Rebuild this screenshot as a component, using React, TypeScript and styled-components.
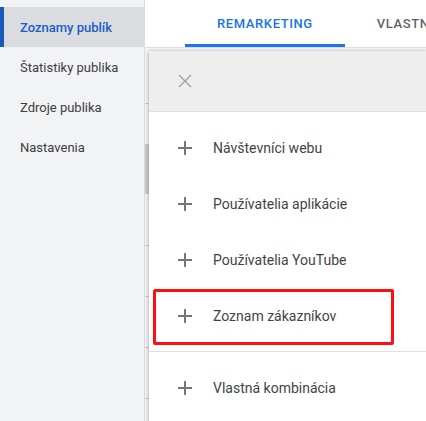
import React from "react"
import styled, { createGlobalStyle } from "styled-components"

const GlobalStyle = createGlobalStyle`
  html, body {
    margin: 0;
    padding: 0;
    width: 426px;
    height: 421px;
    overflow: hidden;
    background: #ffffff;
    font-family: Roboto, "Liberation Sans", Arial, sans-serif;
  }
`

const Page = styled.div`
  display: flex;
  height: 421px;
`

const Sidebar = styled.nav`
  width: 144px;
  flex-shrink: 0;
  padding-top: 7px;
  background: #f1f3f4;
  border-right: 1px solid #dadce0;
`

const NavItem = styled.div<{ $active?: boolean }>`
  display: flex;
  align-items: center;
  height: 40px;
  padding-left: 20px;
  font-size: 13px;
  white-space: nowrap;
  color: ${(p) => (p.$active ? "#1a5dcb" : "#3c4043")};
  font-weight: ${(p) => (p.$active ? 500 : 400)};
  background: ${(p) => (p.$active ? "#dadce0" : "transparent")};
  box-shadow: ${(p) => (p.$active ? "inset 4px 0 0 #185abc" : "none")};
`

const Main = styled.div`
  flex: 1;
  display: flex;
  flex-direction: column;
  min-width: 0;
  overflow: hidden;
`

const Tabs = styled.div`
  display: flex;
  height: 47px;
  padding-left: 40px;
  border-bottom: 1px solid #dadce0;
  flex-shrink: 0;
  overflow: hidden;
`

const Tab = styled.div<{ $active?: boolean }>`
  display: flex;
  align-items: center;
  padding: 0 32px;
  font-size: 13px;
  font-weight: 500;
  letter-spacing: 0.6px;
  text-transform: uppercase;
  white-space: nowrap;
  color: ${(p) => (p.$active ? "#1a73e8" : "#5f6368")};
  box-shadow: ${(p) => (p.$active ? "inset 0 -3px 0 #1a73e8" : "none")};
`

const Body = styled.div`
  position: relative;
  flex: 1;
  background: #f1f3f4;
`

const BgRow = styled.div<{ $h: number }>`
  height: ${(p) => p.$h}px;
  border-bottom: 1px solid #c8cacd;
`

const Scroll = styled.div`
  height: 50px;
  width: 4px;
  margin-top: 40px;
  background: #c9cbce;
`

const Panel = styled.div`
  position: absolute;
  left: 4px;
  top: 3px;
  right: 0;
  bottom: 0;
  background: #ffffff;
  box-shadow: 0 0 3px rgba(0, 0, 0, 0.22), -1px 1px 4px rgba(0, 0, 0, 0.12);
`

const PanelHeader = styled.div`
  display: flex;
  align-items: center;
  height: 60px;
  padding-left: 29px;
  background: #eeeeee;
  border-bottom: 1px solid #e0e0e0;
`

const List = styled.div`
  padding-top: 8px;
`

const Item = styled.div`
  position: relative;
  display: flex;
  align-items: center;
  gap: 21px;
  height: 56px;
  padding-left: 29px;
  font-size: 14px;
  color: #414447;
  white-space: nowrap;
`

const Divider = styled.div`
  height: 1px;
  margin: 7px 0 8px;
  background: #e0e0e0;
`

const Highlight = styled.div`
  position: absolute;
  left: 4px;
  top: 1px;
  width: 241px;
  height: 56px;
  box-sizing: border-box;
  border: 3px solid #ff1010;
  border-radius: 2px;
`

function CloseIcon() {
  return (
    <svg width="14" height="14" viewBox="0 0 14 14">
      <path d="M1 1L13 13M13 1L1 13" stroke="#a0a0a0" strokeWidth="1.4" />
    </svg>
  )
}

function PlusIcon() {
  return (
    <svg width="14" height="14" viewBox="0 0 14 14">
      <path d="M7 0V14M0 7H14" stroke="#757575" strokeWidth="2" />
    </svg>
  )
}

const items = ["Návštevníci webu", "Používatelia aplikácie", "Používatelia YouTube"]

export default function App() {
  return (
    <>
      <GlobalStyle />
      <Page>
        <Sidebar>
          <NavItem $active>Zoznamy publík</NavItem>
          <NavItem>Štatistiky publika</NavItem>
          <NavItem>Zdroje publika</NavItem>
          <NavItem>Nastavenia</NavItem>
        </Sidebar>
        <Main>
          <Tabs>
            <Tab $active>Remarketing</Tab>
            <Tab>Vlastné</Tab>
          </Tabs>
          <Body>
            <BgRow $h={55} />
            <Scroll />
            <BgRow $h={51} />
            <BgRow $h={50} />
            <BgRow $h={50} />
            <BgRow $h={50} />
            <BgRow $h={50} />
            <Panel>
              <PanelHeader>
                <CloseIcon />
              </PanelHeader>
              <List>
                {items.map((label) => (
                  <Item key={label}>
                    <PlusIcon />
                    {label}
                  </Item>
                ))}
                <Item>
                  <PlusIcon />
                  Zoznam zákazníkov
                  <Highlight />
                </Item>
                <Divider />
                <Item>
                  <PlusIcon />
                  Vlastná kombinácia
                </Item>
              </List>
            </Panel>
          </Body>
        </Main>
      </Page>
    </>
  )
}
